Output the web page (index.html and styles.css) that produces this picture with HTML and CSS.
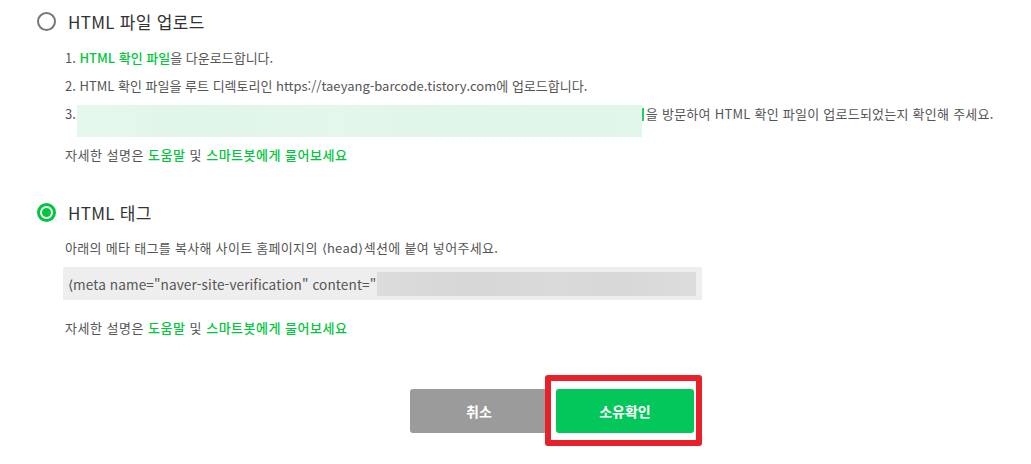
FILE: index.html
```html
<!DOCTYPE html>
<html lang="ko">
<head>
<meta charset="utf-8">
<link rel="stylesheet" href="styles.css">
</head>
<body>
<div class="page">
  <section class="option">
    <div class="opt-head">
      <span class="radio"></span>
      <span class="opt-title">HTML 파일 업로드</span>
    </div>
    <div class="opt-body">
      <p class="line">1. <a class="link">HTML 확인 파일</a>을 다운로드합니다.</p>
      <p class="line">2. HTML 확인 파일을 루트 디렉토리인 https://taeyang-barcode.tistory.com에 업로드합니다.</p>
      <div class="line line3">
        <span>3.</span>
        <span class="blur-green"></span>
        <span class="caret"></span>
        <span class="wide">을 방문하여 HTML 확인 파일이 업로드되었는지 확인해 주세요.</span>
      </div>
      <p class="line help">자세한 설명은 <a class="link">도움말</a> 및 <a class="link">스마트봇에게 물어보세요</a></p>
    </div>
  </section>

  <section class="option second">
    <div class="opt-head">
      <span class="radio checked"></span>
      <span class="opt-title">HTML 태그</span>
    </div>
    <div class="opt-body">
      <p class="line desc">아래의 메타 태그를 복사해 사이트 홈페이지의 <span class="ang">⟨</span>head<span class="ang">⟩</span>섹션에 붙여 넣어주세요.</p>
      <div class="code">
        <span class="code-text"><span class="ang">⟨</span>meta name="naver-site-verification" content="</span>
        <span class="blur-gray"></span>
      </div>
      <p class="line help help2">자세한 설명은 <a class="link">도움말</a> 및 <a class="link">스마트봇에게 물어보세요</a></p>
    </div>
  </section>

  <div class="actions">
    <button class="btn btn-cancel">취소</button>
    <button class="btn btn-confirm">소유확인<span class="highlight"></span></button>
  </div>
</div>
</body>
</html>
```

FILE: styles.css
```css
html, body {
  margin: 0;
  padding: 0;
  background: #fff;
}
body {
  font-family: "Noto Sans CJK KR", "Noto Sans", sans-serif;
  color: #555;
  width: 1031px;
  height: 464px;
  overflow: hidden;
}
.page {
  padding-left: 37px;
}
.option .opt-head {
  display: flex;
  align-items: center;
  height: 42px;
}
.radio {
  box-sizing: border-box;
  width: 19px;
  height: 19px;
  border: 2px solid #777;
  border-radius: 50%;
  display: inline-flex;
  align-items: center;
  justify-content: center;
}
.radio.checked {
  border: 3px solid #00c73c;
}
.radio.checked::after {
  content: "";
  width: 9px;
  height: 9px;
  border-radius: 50%;
  background: #00c73c;
}
.opt-title {
  margin-left: 12px;
  font-size: 17px;
  color: #333;
  letter-spacing: 0.3px;
}
.opt-body {
  padding-left: 28px;
  font-size: 13px;
  letter-spacing: 0;
}
.line {
  margin: 0;
  line-height: 28px;
  height: 28px;
  white-space: nowrap;
}
.opt-body > .line:first-child {
  margin-top: 2px;
}
.link {
  color: #00c73c;
  font-weight: 500;
  text-decoration: none;
}
.ang {
  font-family: "DejaVu Sans", sans-serif;
  font-weight: 300;
}
.wide {
  letter-spacing: 0.25px;
}
.line3 {
  display: flex;
  align-items: flex-start;
  height: 37px;
}
.blur-green {
  display: block;
  width: 565px;
  height: 32px;
  margin-top: 5px;
  margin-left: 1px;
  background: linear-gradient(90deg, #e6f8ed 0%, #e0f6e9 20%, #e4f7ec 45%, #dff6e8 70%, #e2f7eb 100%);
}
.caret {
  display: block;
  width: 2px;
  height: 13px;
  margin-top: 8px;
  margin-right: 2px;
  background: #1fd16a;
}
.help {
  margin-top: 4px;
  letter-spacing: 0.5px;
}
.second {
  margin-top: 22px;
}
.desc {
  margin-top: 1px !important;
  letter-spacing: 0.3px;
}
.code {
  box-sizing: border-box;
  margin-top: 5px;
  margin-left: -2px;
  width: 639px;
  height: 33px;
  background: #eeeeee;
  display: flex;
  align-items: center;
  padding-left: 5px;
  white-space: nowrap;
}
.code-text {
  font-size: 13.6px;
  letter-spacing: 0.1px;
  color: #555;
}
.blur-gray {
  display: block;
  flex: 1;
  height: 24px;
  margin-top: 1px;
  margin-left: 1px;
  margin-right: 6px;
  background: linear-gradient(90deg, #dcdcdc 0%, #d6d6d6 30%, #dadada 55%, #d7d7d7 75%, #dddddd 100%);
}
.help2 {
  margin-top: 14px;
}
.actions {
  margin-top: 47px;
  padding-left: 373px;
  display: flex;
  gap: 8px;
}
.btn {
  width: 138px;
  height: 44px;
  border: 0;
  border-radius: 3px;
  color: #fff;
  font-family: "Noto Sans CJK KR", "Noto Sans", sans-serif;
  font-size: 14px;
  font-weight: 700;
  padding: 0;
}
.btn-cancel {
  background: #9b9b9b;
}
.btn-confirm {
  background: #03c75a;
  position: relative;
}
.highlight {
  position: absolute;
  left: -11px;
  top: -14px;
  width: 157px;
  height: 71px;
  box-sizing: border-box;
  border: 6px solid #e8202a;
  border-radius: 3px;
}
```
